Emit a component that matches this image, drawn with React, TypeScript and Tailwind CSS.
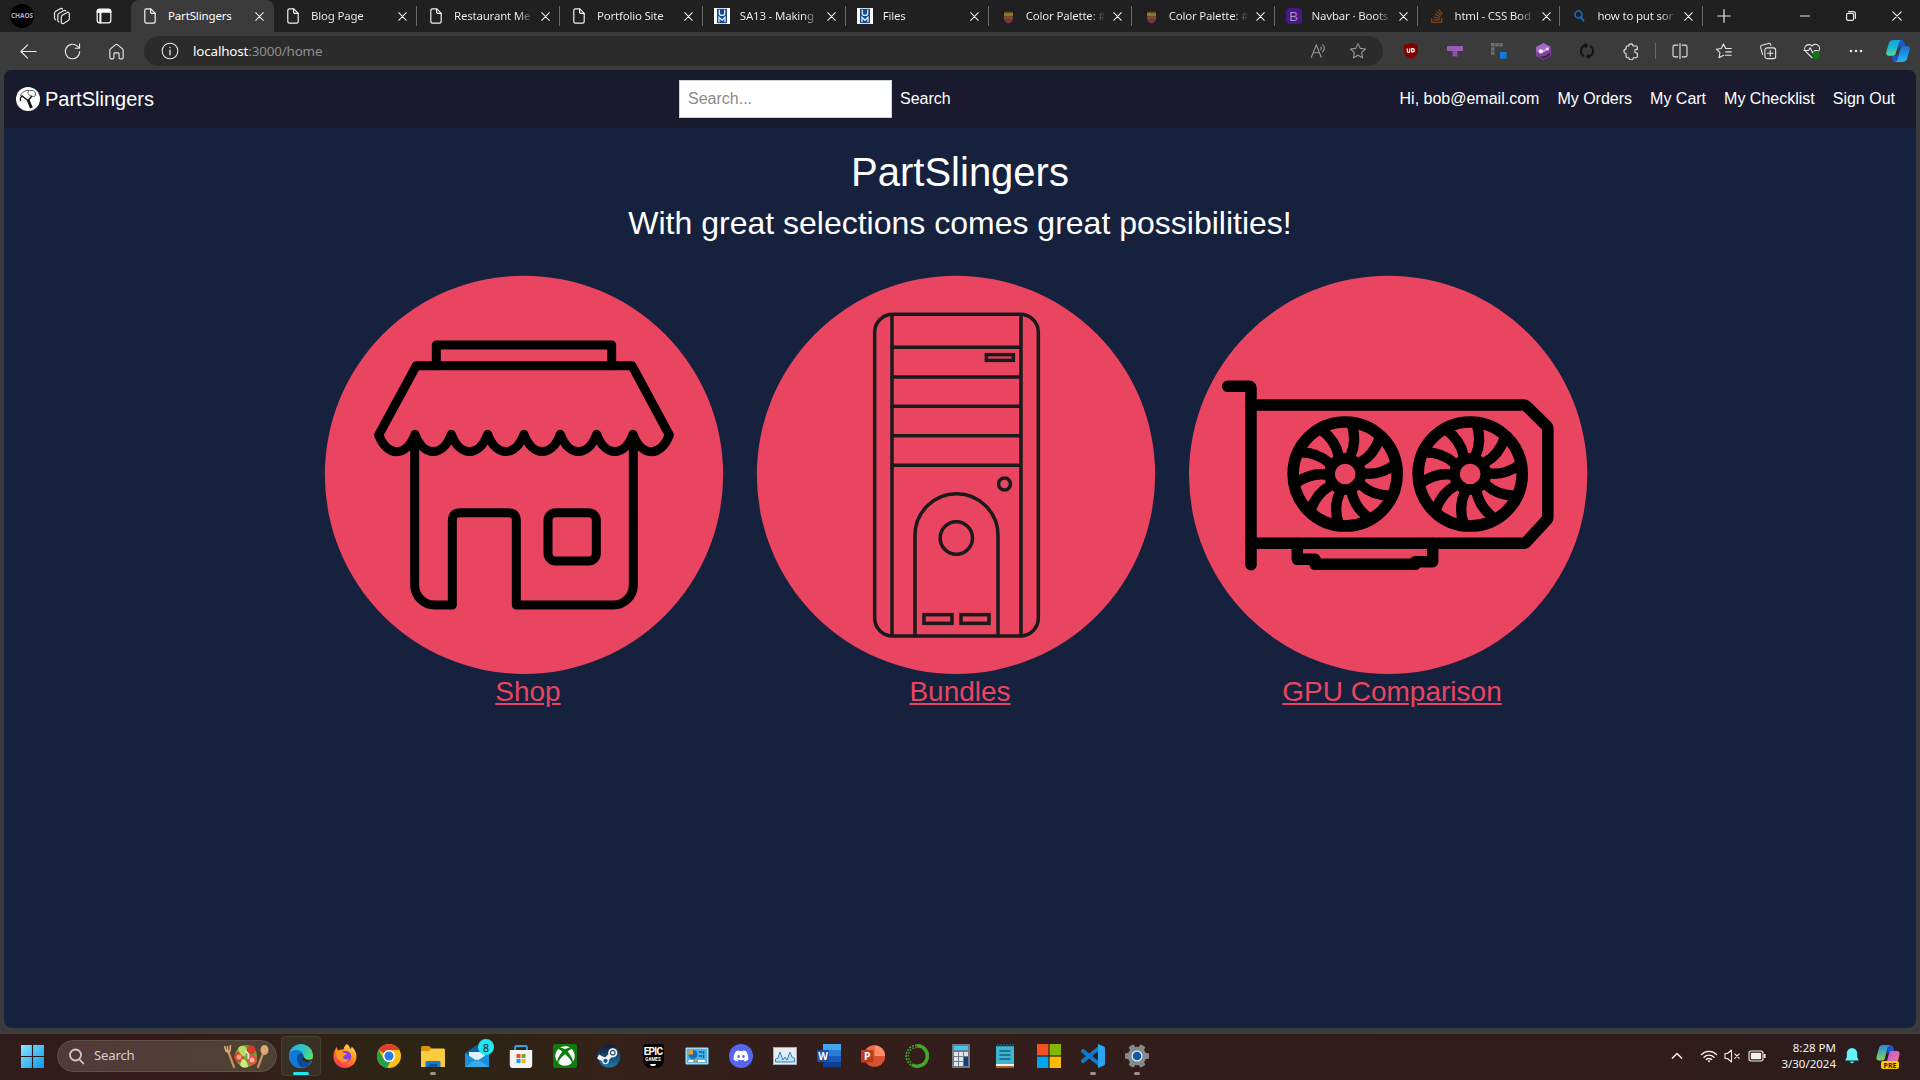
import React from 'react';
import { FaDiscord, FaSteam, FaStackOverflow, FaXbox } from 'react-icons/fa';

type IconProps = { children: React.ReactNode; size?: number; box?: string; tone?: string; className?: string };

/** Thin outlined glyph used across the browser chrome. */
function Line({ children, size = 20, box = '0 0 20 20', tone = 'text-[#e6e6e6]', className = '' }: IconProps) {
  return (
    <svg width={size} height={size} viewBox={box} fill="none" stroke="currentColor" strokeWidth="1.2" strokeLinecap="round" strokeLinejoin="round" className={`shrink-0 ${tone} ${className}`}>
      {children}
    </svg>
  );
}

function Art({ children, size = 24, box = '0 0 24 24', className = '' }: IconProps) {
  return (
    <svg width={size} height={size} viewBox={box} className={`shrink-0 ${className}`}>
      {children}
    </svg>
  );
}

/* ---------- Tab strip ---------- */

const PageFile = () => (
  <Line size={16} box="0 0 16 16" tone="text-[#f2f2f2]">
    <path d="M4.5 .8h4.3l4.4 4.5v8.2a1.7 1.7 0 0 1-1.7 1.7h-7a1.7 1.7 0 0 1-1.7-1.7v-11A1.7 1.7 0 0 1 4.5 .8z" />
    <path d="M8.6 1v3.200a1.200 1.200 0 0 0 1.200 1.200H13" />
  </Line>
);

const UM = () => (
  <Art size={16} box="0 0 16 16">
    <path fill="#fff" d="M0 0h16v16H0z" />
    <path fill="#134a91" d="M3 .8h10v14.400H3z" />
    <path d="M5.300 1.800v3.400a2.700 2.200 0 0 0 5.400 0V1.800" fill="none" stroke="#dfe8f3" strokeWidth="1.300" />
    <path d="M5 14.200V9.300L8 12.300l3-3v4.900" fill="none" stroke="#dfe8f3" strokeWidth="1.300" />
  </Art>
);

const Palette = () => (
  <Art size={16} box="0 0 16 16">
    <path d="M1 3.500l3 1.500M15 3.500l-3 1.500M5 2l1.500 2M11 2L9.500 4" stroke="#1d1113" strokeWidth="1.500" />
    <path fill="#4f4a22" d="M4 3.500h9V5H4z" />
    <path fill="#897a1f" d="M4 5h9v3.500H4z" />
    <path fill="#7f4a35" d="M4 8.500h9V11H4z" />
    <path fill="#7c3242" d="M4 11h9c0 2-2 4-4.500 4.500C6 15 4 13 4 11z" />
  </Art>
);

const Bootstrap = () => (
  <div className="flex size-4 shrink-0 items-center justify-center rounded-sm bg-[#4b1784] font-['Liberation_Sans',Arial,sans-serif] text-[13px] leading-none text-[#a494b8]">B</div>
);

const BingSearch = () => (
  <Art size={16} box="0 0 16 16">
    <circle cx="7.500" cy="6.500" r="3.500" fill="none" stroke="#1273cc" strokeWidth="1.500" />
    <path d="M9.800 9.200l2.800 3.600" stroke="#1273cc" strokeWidth="1.800" strokeLinecap="round" />
  </Art>
);

const TABS: { title: string; icon: React.ReactNode }[] = [
  { title: 'PartSlingers', icon: <PageFile /> },
  { title: 'Blog Page', icon: <PageFile /> },
  { title: 'Restaurant Me', icon: <PageFile /> },
  { title: 'Portfolio Site', icon: <PageFile /> },
  { title: 'SA13 - Making', icon: <UM /> },
  { title: 'Files', icon: <UM /> },
  { title: 'Color Palette: #', icon: <Palette /> },
  { title: 'Color Palette: #', icon: <Palette /> },
  { title: 'Navbar · Boots', icon: <Bootstrap /> },
  { title: 'html - CSS Bod', icon: <FaStackOverflow size={16} className="shrink-0 text-[#7c421c]" /> },
  { title: 'how to put sor', icon: <BingSearch /> },
];

const Cross = ({ size = 9 }: { size?: number }) => (
  <Line size={size} box="0 0 10 10" tone="text-[#f0f0f0]">
    <path d="M.8.8l8.400 8.400M9.200.8L.8 9.200" />
  </Line>
);

function TabStrip() {
  return (
    <div className="flex h-8 bg-[#202020]">
      <div className="flex w-[131px] shrink-0 items-center">
        <div className="ml-[10px] flex size-6 items-center justify-center overflow-hidden rounded-full bg-black text-[6.500px] font-bold text-[#b9a6cf]">CHAOS</div>
        <Line size={18} box="0 0 18 18" className="ml-[19px]">
          <path d="M2.700 12.800A2 2 0 0 1 1.500 11V6.200a2 2 0 0 1 1-1.700L7.500 1.600a1.600 1.600 0 0 1 2 .4" />
          <path d="M6 15a2 2 0 0 1-1.200-1.800V8.100a2 2 0 0 1 1-1.700l5-2.900a1.600 1.600 0 0 1 2 .4" />
          <path d="M8.300 10a2 2 0 0 1 1-1.700l4.800-2.800a1.400 1.400 0 0 1 2.200 1.200v5.100a2 2 0 0 1-1 1.700l-4.800 2.900a1.400 1.400 0 0 1-2.200-1.200z" />
        </Line>
        <Line size={16} box="0 0 16 16" tone="text-white" className="ml-[25px]">
          <rect x="1.200" y="1.200" width="13.600" height="13.600" rx="2.400" />
          <path d="M1.500 3.800h13M4.400 4v10.500" strokeWidth="2" />
          <path d="M2 2.200h12" strokeWidth="2" />
        </Line>
      </div>
      {TABS.map((t, i) => (
        <div
          key={i}
          className={
            i === 0
              ? 'flex w-[143px] shrink-0 items-center rounded-t-lg bg-[#3b3b3b] pl-[11px]'
              : 'flex w-[142.95px] shrink-0 items-center pl-[11px]'
          }
        >
          {t.icon}
          <span
            className={
              i === 0
                ? 'ml-[10px] w-[80px] whitespace-nowrap text-[11.500px] tracking-[-0.15px] text-white'
                : 'ml-[10px] w-[80px] bg-gradient-to-r from-[#f4f4f4] from-80% to-[#202020] to-100% bg-clip-text whitespace-nowrap text-[11.500px] tracking-[-0.2px] text-transparent'
            }
          >
            {t.title}
          </span>
          <span className="ml-[7px] flex">
            <Cross />
          </span>
          {i > 0 && <span className="ml-auto h-5 w-px bg-[#6a6a6a]" />}
        </div>
      ))}
      <div className="flex flex-1 items-center">
        <Line size={14} box="0 0 14 14" className="ml-[14px]">
          <path d="M7 .7v12.600M.7 7h12.600" />
        </Line>
        <div className="ml-auto flex">
          <div className="flex w-[46px] justify-center"><Line size={10} box="0 0 10 10"><path d="M.5 5h9" /></Line></div>
          <div className="flex w-[46px] justify-center">
            <Line size={10} box="0 0 10 10">
              <rect x=".6" y="2.400" width="7" height="7" rx="1.300" />
              <path d="M2.600.7H7.400a2 2 0 0 1 2 2v4.600" />
            </Line>
          </div>
          <div className="flex w-[46px] justify-center"><Cross size={10} /></div>
        </div>
      </div>
    </div>
  );
}

/* ---------- Toolbar ---------- */

const Cell = ({ children }: { children: React.ReactNode }) => (
  <div className="flex w-11 shrink-0 items-center justify-center">{children}</div>
);

const Ribbon = ({ size }: { size: number }) => (
  <Art size={size}>
    <defs>
      <linearGradient id="ribA" x1="0" y1="0" x2="0" y2="1">
        <stop offset="0" stopColor="#12a5e0" />
        <stop offset=".5" stopColor="#1fb9cf" />
        <stop offset="1" stopColor="#55dc9a" />
      </linearGradient>
      <linearGradient id="ribB" x1="0" y1="0" x2="0" y2="1">
        <stop offset="0" stopColor="#1c6fd0" />
        <stop offset="1" stopColor="#25b4f5" />
      </linearGradient>
    </defs>
    <path fill="#1b57c9" d="M13 1h2.500c1.500 0 2.400 1 2.800 2.400L19.500 7H15l-3 3z" />
    <path fill="url(#ribA)" d="M7.500 1h7.800c-1.300.3-2 1.300-2.400 2.700L9.700 14.600C9.200 16 8.400 16.800 7 16.800H3C1 16.800-.3 15.200.2 13.200L3 4C3.600 2.200 5.300 1 7.500 1z" />
    <path fill="#1f50e0" d="M6 16.800h4l2-1-2 7.200H9c-1.400 0-2-1-2.300-2.300z" />
    <path fill="url(#ribB)" d="M17.500 7H21c2 0 3.300 1.600 2.800 3.600L21 20c-.6 1.800-2.300 3-4.500 3H9c1.300-.3 2-1.300 2.400-2.700l3.200-10.900C15 8 16 7 17.500 7z" />
  </Art>
);

function Toolbar() {
  return (
    <div className="flex h-[38px] items-center bg-[#3b3b3b]">
      <div className="flex w-[144px] shrink-0 pl-[6px]">
        <Cell><Line size={19}><path d="M18 10H2.500M9 3L2 10l7 7" /></Line></Cell>
        <Cell><Line size={19}><path d="M17.600 10a7.600 7.600 0 1 1-2.500-5.600L17.300 6.500M17.400 2v4.600h-4.600" /></Line></Cell>
        <Cell><Line size={19}><path d="M3 8.800a2 2 0 0 1 .7-1.500L8.700 3a2 2 0 0 1 2.600 0l5 4.300a2 2 0 0 1 .7 1.500v7.400a1.500 1.500 0 0 1-1.500 1.500h-1.300a1.500 1.500 0 0 1-1.500-1.500V12.500a1 1 0 0 0-1-1H8.300a1 1 0 0 0-1 1v3.700a1.500 1.500 0 0 1-1.500 1.500H4.500A1.500 1.500 0 0 1 3 16.200z" /></Line></Cell>
      </div>
      <div className="flex h-[30px] w-[1239px] shrink-0 items-center rounded-full bg-[#2b2b2b] pl-[17px] pr-[16px]">
        <Line size={18}><circle cx="10" cy="10" r="8.700" /><path d="M10 9v5.200M10 6v.3" strokeWidth="1.500" /></Line>
        <span className="ml-[14px] text-[13.400px] tracking-[-0.15px] text-[#8f8f8f]"><span className="text-white">localhost</span>:3000/home</span>
        <span className="ml-auto flex gap-[21px]">
          <Line size={18} tone="text-[#9a9a9a]"><path d="M1.500 17L7 3l5.500 14M3.500 12h7M12 5.500c.8.800.8 2 0 3M14 3c2.300 2 2.300 5.300 0 8" /></Line>
          <Line size={18} tone="text-[#9a9a9a]"><path d="M10 1.800l2.500 5.300 5.800.7-4.300 4 1.100 5.800-5.100-2.900-5.100 2.900L6 11.800l-4.300-4 5.800-.7z" /></Line>
        </span>
      </div>
      <div className="flex pl-[6px]">
        <Cell>
          <Art size={16} box="0 0 16 16">
            <path fill="#800000" d="M8 0l7 2v6c0 4-3 6.500-7 8-4-1.500-7-4-7-8V2z" />
            <path d="M4.300 5.500v2.700a1.200 1.200 0 0 0 2.400 0V5.500M8.700 8.900V5.600h1a1.650 1.650 0 0 1 0 3.300z" fill="none" stroke="#fff" strokeWidth="1.200" />
          </Art>
        </Cell>
        <Cell><Art size={16} box="0 0 16 16"><path fill="#9a5cb8" d="M0 3h16v5H0z" /><path fill="#8a4fa8" d="M5.500 8h5v5.500h-5z" /></Art></Cell>
        <Cell>
          <Art size={16} box="0 0 16 16">
            <path fill="#6e6e6e" d="M0 0h3.500v3.500H0zM4.200 0h3.500v3.500H4.200zM8.400 0h3.500v3.500H8.400zM0 4.200h3.500v3.500H0zM0 8.400h3.500v3.500H0z" />
            <path fill="#0a7be8" d="M9 9h6.500v6.500H9z" />
          </Art>
        </Cell>
        <Cell>
          <Art size={17} box="0 0 16 16">
            <path fill="#7d429e" d="M8 0l7 3.800v8.400L8 16l-7-3.800V3.800z" />
            <path fill="#a368c4" d="M8 0l7 3.800L8 7.500 1 9V3.800z" />
            <path d="M5 8.500C8 9 9 5.500 13 6" stroke="#cda3e2" strokeWidth="2" fill="none" />
            <path fill="#43204f" d="M3 12c3 2 8 0 11-3v3L8 15z" />
            <circle cx="5.500" cy="7.800" r="2" fill="#fff" />
            <circle cx="11.500" cy="5.500" r="1.200" fill="#f3e5fa" />
          </Art>
        </Cell>
        <Cell><Line size={16} box="0 0 16 16" tone="text-[#121212]"><path d="M4.500 12.800A5.800 5.800 0 0 1 7 2.300M11.500 3.200A5.800 5.800 0 0 1 9 13.700" strokeWidth="2" /><path d="M6 .9L8.300 2.300 6.600 4.400M10 15.100L7.700 13.700l1.700-2.100" strokeWidth="1.400" /></Line></Cell>
        <Cell><Line size={18}><path d="M7.500 4.500a2.400 2.400 0 0 1 4.800 0h3.400a1.300 1.300 0 0 1 1.300 1.300v2.400h-.9a2 2 0 0 0 0 4h.9V16.200a1.300 1.300 0 0 1-1.300 1.300h-3.200a2.400 2.400 0 0 1-4.800 0H5.800a1.300 1.300 0 0 1-1.300-1.300v-3.500a2.400 2.400 0 0 1 0-4.800V5.800a1.300 1.300 0 0 1 1.300-1.300z" /></Line></Cell>
      </div>
      <span className="mx-[2px] h-4 w-px bg-[#6a6a6a]" />
      <div className="flex">
        <Cell><Line size={18}><path d="M10 1.500v17M7.500 3.500H4A1.800 1.800 0 0 0 2.200 5.300v9.400A1.800 1.800 0 0 0 4 16.500h3.500M12.500 3.500H16a1.800 1.800 0 0 1 1.800 1.800v9.400a1.800 1.800 0 0 1-1.800 1.800h-3.500" /></Line></Cell>
        <Cell><Line size={18}><path d="M9.500 14.800l-5 2.600 1-5.500L1.500 8l5.500-.8L9.400 2.200 11.900 7.200H18M12 11h6M11.500 14.800H18" /></Line></Cell>
        <Cell><Line size={18}><rect x="6.500" y="6.500" width="12" height="12" rx="2.500" /><path d="M12.500 9.500v6M9.500 12.500h6M4 14l-2.200-8A2 2 0 0 1 3.200 3.600L10.500 1.600A2 2 0 0 1 13 3l.2.800" /></Line></Cell>
        <Cell>
          <Line size={18}>
            <path d="M10 17.500L3 10.500a4.600 4.600 0 0 1 7-6 4.600 4.600 0 0 1 7.500 5.500M1 9.500h5l2-3 3 6 2-3h3" />
            <circle cx="14.500" cy="14.500" r="4.300" fill="#0f7a10" stroke="none" />
          </Line>
        </Cell>
        <Cell><svg width="14" height="4" viewBox="0 0 14 4" fill="#e6e6e6"><circle cx="2" cy="2" r="1.300" /><circle cx="7" cy="2" r="1.300" /><circle cx="12" cy="2" r="1.300" /></svg></Cell>
        <div className="flex w-[40px] items-center justify-center"><Ribbon size={24} /></div>
      </div>
    </div>
  );
}

/* ---------- Site ---------- */

const SITE_FONT = "font-['Liberation_Sans',Arial,sans-serif]";

function SiteNav() {
  return (
    <nav className="flex h-[58px] items-center justify-between bg-[#1a1a2e] px-3 text-base text-white">
      <div className="flex w-[663px] items-center gap-[5px]">
        <Art>
          <circle cx="12" cy="12" r="12" fill="#fff" />
          <path d="M12 13.500L6 9C4 11 4 13 5 14M12 13.500l4-4.500" fill="none" stroke="#111" strokeWidth="1.400" />
          <path d="M15.400 21l-3.300-8" stroke="#111" strokeWidth="2.800" />
          <path d="M4.500 9C6 4.500 10 3 13.500 3.500c4-1 6.500 1.500 6 4.500-.5 2-3 2-4 .500" fill="none" stroke="#555" strokeWidth="1" />
          <path d="M13 4c-2 1.500-1 4 2 5" fill="none" stroke="#555" strokeWidth=".9" />
        </Art>
        <span className="text-xl leading-[30px]">PartSlingers</span>
      </div>
      <div className="mr-auto flex items-center gap-2">
        <div className="flex h-[38px] w-[213px] items-center border border-[#ced4da] bg-white pl-[8px] text-[#8a8a8a]">Search...</div>
        <span>Search</span>
      </div>
      <div className="flex gap-[18px] pr-[9px]">
        <span>Hi, bob@email.com</span>
        <span>My Orders</span>
        <span>My Cart</span>
        <span>My Checklist</span>
        <span>Sign Out</span>
      </div>
    </nav>
  );
}

const ShopArt = () => (
  <svg width="408" height="400" viewBox="42 45 1224 1200" fill="none">
    <circle cx="642" cy="644.500" r="597.500" fill="#e94560" />
    <g stroke="#000" strokeWidth="27" strokeLinejoin="round" strokeLinecap="round">
      <path d="M379 317V255H905V317" />
      <path d="M206 525L319 317H966L1078 525C1052 592 995 592 969 523C943 592 886 592 860 523C834 592 777 592 751 523C725 592 668 592 642 523C616 592 559 592 533 523C507 592 450 592 424 523C398 592 341 592 315 523C289 592 232 592 206 525z" />
      <path d="M314 535V975a60 60 0 0 0 60 60H427V782q0-24 24-24H595q24 0 24 24V1035H910a60 60 0 0 0 60-60V535" />
      <rect x="714" y="758" width="145" height="145" rx="23" />
    </g>
  </svg>
);

const TowerArt = () => (
  <svg width="408" height="400" viewBox="48 45 1224 1200" fill="none">
    <circle cx="648" cy="644.500" r="597.500" fill="#e94560" />
    <g stroke="#1a1a1c" strokeWidth="10.500">
      <rect x="404" y="163" width="491" height="965" rx="54" />
      <path d="M456 163V1128M843 163V1128M456 262H843M456 351H843M456 439H843M456 527H843M456 616H843" />
      <rect x="739" y="284" width="81" height="17" />
      <circle cx="793.500" cy="672" r="18" />
      <path d="M525 1128V826a124 124 0 0 1 249 0V1128" />
      <circle cx="649" cy="834" r="48.500" />
      <rect x="552" y="1064" width="84" height="26" />
      <rect x="663" y="1064" width="84" height="26" />
    </g>
  </svg>
);

const BLADES = [0, 36, 72, 108, 144, 180, 216, 252, 288, 324];

const Fan = ({ cx }: { cx: number }) => (
  <g transform={`translate(${cx} 642)`}>
    <circle r="156" strokeWidth="35" />
    <circle r="47" strokeWidth="32" />
    {BLADES.map((a) => (
      <path key={a} d="M16-55Q36-98 20-148" strokeWidth="31" strokeLinecap="butt" transform={`rotate(${a})`} />
    ))}
  </g>
);

const GpuArt = () => (
  <svg width="408" height="400" viewBox="24 45 1224 1200" fill="none">
    <circle cx="624.500" cy="644.500" r="597.500" fill="#e94560" />
    <g stroke="#000" strokeWidth="34.500" strokeLinejoin="round" strokeLinecap="round">
      <path d="M143 379H207Q213 379 213 385V914" />
      <path d="M213 435H1030Q1036 435 1040 439L1099 497Q1103.500 501 1103.500 507V771Q1103.500 777 1099 781L1040 845Q1036 850 1030 850H213" />
      <path d="M352 850V898H405V913H706V905H758V850" />
      <Fan cx={495.500} />
      <Fan cx={870.500} />
    </g>
  </svg>
);

const CARDS = [
  { label: 'Shop', art: <ShopArt /> },
  { label: 'Bundles', art: <TowerArt /> },
  { label: 'GPU Comparison', art: <GpuArt /> },
];

function Site() {
  return (
    <div className={`mx-1 h-[958px] overflow-hidden rounded-lg bg-[#16213e] ${SITE_FONT}`}>
      <SiteNav />
      <main className="pt-5 text-center text-white">
        <h1 className="text-[40px] leading-[48px]">PartSlingers</h1>
        <h2 className="mt-2 text-[32px] leading-[38px]">With great selections comes great possibilities!</h2>
        <div className="mx-auto mt-[33px] grid w-[1296px] grid-cols-3">
          {CARDS.map((c) => (
            <div key={c.label} className="px-3">
              {c.art}
              <a className="block text-[28px] leading-[34px] text-[#e94560] underline">{c.label}</a>
            </div>
          ))}
        </div>
      </main>
    </div>
  );
}

/* ---------- Taskbar ---------- */

const Edge = () => (
  <Art>
    <defs>
      <linearGradient id="edgeTop" x1="0" y1="0" x2="1" y2=".6"><stop offset="0" stopColor="#2bb0e8" /><stop offset=".6" stopColor="#2fc7b8" /><stop offset="1" stopColor="#6fe05a" /></linearGradient>
    </defs>
    <circle cx="12" cy="12" r="12" fill="url(#edgeTop)" />
    <path fill="#1177d4" d="M0 12C0 8 4 5.500 8 6c4 .4 6.500 3 6.500 6 0 1.500-1.500 2-1.500 3.300 0 2.500 5 4 9.500 1.700C20.500 21.500 16.500 24 12 24 5 24 0 19 0 12z" />
    <path fill="#0c4a9c" d="M8 14c0-3 2-5 4.500-4.500 1.500.3 2 1.500 2 2.500 0 1.500-1.500 2-1.500 3.300 0 2.500 5 4 9.500 1.700C20.500 21.500 17 23.500 14 23.500 10.500 23 8 18.500 8 14z" />
    <path fill="#312a1c" d="M14.500 12c0 1.500-1.500 2-1.500 3.300 0 2.500 5 4 9.500 1.700 1-.5 1.700-1.700 1.400-2.500-2 2-8 2.300-9.400-2.500z" />
  </Art>
);

const Firefox = () => (
  <Art>
    <defs>
      <linearGradient id="fox" x1=".8" y1="0" x2=".2" y2="1"><stop offset="0" stopColor="#ffe34a" /><stop offset=".45" stopColor="#ff8a1f" /><stop offset="1" stopColor="#f52a5e" /></linearGradient>
    </defs>
    <path fill="url(#fox)" d="M14 0c2 1.500 3 3.500 3.500 5 1-.5 1-1.500 1-2.500C22 5 23.500 9 23.500 12.500 23.500 19 18.500 24 12 24S.5 19 .5 13C.5 8 2 6 3.500 3L5 6.500C7 5 9 5.500 10.500 5.500 11 3 12 1 14 0z" />
    <circle cx="12.500" cy="12.500" r="5.800" fill="#8440d8" />
    <path fill="#ff9a1e" d="M3 8c3-2 6-1 8 1l3 .5c-1 2-3.500 1.500-4 3.500 1 3 4 3 6 1.500-1 4-6 5-9 2.500S3 11 3 8z" />
  </Art>
);

const Chrome = () => (
  <Art>
    <circle cx="12" cy="12" r="12" fill="#fbc116" />
    <path fill="#e33b2e" d="M12 0a12 12 0 0 1 10.400 6H12a6 6 0 0 0-5.200 3L1.600 6A12 12 0 0 1 12 0z" />
    <path fill="#1ea04c" d="M1.600 6l5.200 9A6 6 0 0 0 13 18l-3 5.800A12 12 0 0 1 1.600 6z" />
    <circle cx="12" cy="12" r="6" fill="#fff" />
    <circle cx="12" cy="12" r="4.600" fill="#2a7bea" />
  </Art>
);

const Explorer = () => (
  <Art>
    <path fill="#d9930c" d="M0 3.500A1.500 1.500 0 0 1 1.500 2H8l2.500 2.500V9H0z" />
    <path fill="#fccb40" d="M0 7h8l2.500-2.500H22.500A1.500 1.500 0 0 1 24 6v17H0z" />
    <path fill="#1977c8" d="M4.500 23v-4.500A1.500 1.500 0 0 1 6 17h12a1.500 1.500 0 0 1 1.500 1.500V23z" />
    <path fill="#0e5599" d="M8 20h8v3H8z" />
  </Art>
);

const Mail = () => (
  <div className="relative flex">
    <Art>
      <path fill="#0f5fa8" d="M0 9L12 1l12 8v5H0z" />
      <path fill="#dff1fb" d="M4 8h16v8H4z" />
      <path fill="#1a90dc" d="M0 9l12 8 12-8v14H0z" />
      <path fill="#50c0f5" d="M0 23l12-8 12 8z" opacity=".6" />
    </Art>
    <span className="absolute -right-[5px] -top-[5px] flex size-4 items-center justify-center rounded-full bg-[#22e6f2] text-[11px] leading-none text-[#0a2230]">8</span>
  </div>
);

const Store = () => (
  <Art>
    <path d="M6 6V3.500A1.500 1.500 0 0 1 7.500 2h9A1.500 1.500 0 0 1 18 3.500V6" fill="none" stroke="#2aa8ec" strokeWidth="1.800" />
    <path fill="#f4f4f4" d="M.8 6h22.400v15a3 3 0 0 1-3 3H3.800a3 3 0 0 1-3-3z" />
    <path fill="#e84e26" d="M7.500 10h4v4h-4z" /><path fill="#71b01c" d="M12.500 10h4v4h-4z" />
    <path fill="#1d9de2" d="M7.500 15h4v4h-4z" /><path fill="#f5b41a" d="M12.500 15h4v4h-4z" />
  </Art>
);

const Xbox = () => (
  <div className="flex size-6 items-center justify-center rounded-[2px] bg-[#107c10]"><FaXbox size={20} className="text-white" /></div>
);

const Steam = () => (
  <Art>
    <defs><linearGradient id="steam" x1="0" y1="0" x2="0" y2="1"><stop offset="0" stopColor="#111a35" /><stop offset="1" stopColor="#1f78b0" /></linearGradient></defs>
    <circle cx="12" cy="12" r="11.500" fill="url(#steam)" />
    <path d="M1 12.500l7.500 4 6.500-7" stroke="#eef3f7" strokeWidth="4.500" fill="none" strokeLinejoin="round" />
    <circle cx="15.800" cy="8.800" r="4.600" fill="#eef3f7" /><circle cx="15.800" cy="8.800" r="2.700" fill="#15294d" /><circle cx="15.800" cy="8.800" r="1.800" fill="#eef3f7" />
    <circle cx="8.500" cy="16.800" r="2.800" fill="#1b5a8c" stroke="#eef3f7" strokeWidth="1.300" />
  </Art>
);

const Epic = () => (
  <div className="flex h-6 w-[21px] flex-col items-center rounded-[3px] rounded-b-[8px] bg-black pt-[2px] text-white">
    <span className="font-[Roboto,sans-serif] text-[10px] font-bold leading-[11px] tracking-[-0.7px]">EPIC</span>
    <span className="font-[Roboto,sans-serif] text-[4.500px] font-bold leading-[5px]">GAMES</span>
    <span className="mt-[2px] h-[2px] w-[6px] rounded-b-full bg-white" />
  </div>
);

const ControlPanel = () => (
  <Art>
    <rect x=".5" y="3.500" width="23" height="17" rx="1" fill="#9fdcf8" />
    <path fill="#4db4ea" d="M2 5h20v14H2z" />
    <circle cx="8" cy="10.500" r="4.500" fill="#1570c0" />
    <path fill="#f29a1f" d="M8 10.500V5.500a4.800 4.800 0 0 0-5 5z" />
    <path d="M14 8h3M18.500 7v3M14 12h3M18.500 11v3" stroke="#0e5799" strokeWidth="1.500" />
    <path d="M3.500 17h5M13 17h7" stroke="#fff" strokeWidth="1.800" /><path d="M8 17h5" stroke="#ef8b1d" strokeWidth="1.800" />
  </Art>
);

const Discord = () => (
  <div className="flex size-6 items-center justify-center rounded-full bg-[#5865f2]"><FaDiscord size={16} className="text-white" /></div>
);

const Monitor = () => (
  <Art>
    <rect x=".5" y="3.500" width="23" height="17" fill="#e9edf0" stroke="#a6adb3" />
    <path d="M2.500 18v-3l2.500-1 2-6 3 8 2-3 2 3 3-8 2 5 2.500 1v4z" fill="#bfe0f2" stroke="#3487bd" />
  </Art>
);

const Word = () => (
  <Art>
    <path fill="#41a5ee" d="M6 0h18v7H6z" /><path fill="#2b7cd3" d="M6 6h18v6H6z" /><path fill="#185abd" d="M6 12h18v6H6z" /><path fill="#103f91" d="M6 18h18v5H6z" />
    <rect y="6" width="12" height="12" rx="1.200" fill="#1553ad" />
    <text x="6" y="15.600" textAnchor="middle" fontSize="10" fontWeight="700" fill="#fff">W</text>
  </Art>
);

const PowerPoint = () => (
  <Art>
    <circle cx="13.500" cy="12" r="10.800" fill="#d35230" />
    <path fill="#ff8f6b" d="M13.500 1.200A10.800 10.800 0 0 1 24 12H13.500z" /><path fill="#ed6c47" d="M13.500 1.200V12H2.800a10.800 10.800 0 0 1 10.700-10.800z" />
    <rect y="6" width="12.500" height="12.500" rx="1.200" fill="#c23a1c" />
    <text x="6.200" y="16" textAnchor="middle" fontSize="10.500" fontWeight="700" fill="#fff">P</text>
  </Art>
);

const Anaconda = () => (
  <Art>
    <path d="M12 1.800a10.200 10.200 0 1 1-5 19" fill="none" stroke="#44a82b" strokeWidth="3.600" />
    <path d="M12 1.200A10.800 10.800 0 0 0 7 21.600" fill="none" stroke="#44a82b" strokeWidth="1.600" strokeDasharray="2 1.200" />
    <path d="M12 3.500A8.500 8.500 0 0 0 7 19" fill="none" stroke="#44a82b" strokeWidth="1.500" strokeDasharray="1.500 1.600" />
  </Art>
);

const Calculator = () => (
  <Art>
    <rect x="3" width="18" height="24" rx="1" fill="#6e7b86" />
    <path fill="#3fc8f2" d="M5 2h14v4H5z" />
    {[8, 13, 18].map((y) => [5, 10, 15].map((x) => <rect key={`${x}-${y}`} x={x} y={y} width="4" height="4" fill={x === 15 && y > 8 ? '#123f78' : '#dfe6ea'} />))}
    <path fill="#123f78" d="M15 13h4v9h-4z" />
  </Art>
);

const Notepad = () => (
  <Art>
    <path fill="#3fb4d0" d="M3 2h18v18H3z" />
    <path fill="#f2f2f2" d="M3 20h18v2H3z" /><path fill="#b0601a" d="M3 22h18v2H3z" />
    <path d="M5 0v3M8 0v3M11 0v3M14 0v3M17 0v3M20 0v3" stroke="#1a6a86" strokeWidth="1.300" />
    <path d="M6.500 7h11M6.500 11h11M6.500 15h11" stroke="#155f7c" strokeWidth="1.600" />
  </Art>
);

const Squares = () => (
  <Art>
    <path fill="#f25022" d="M0 0h11.400v11.400H0z" /><path fill="#7fba00" d="M12.600 0H24v11.400H12.600z" />
    <path fill="#00a4ef" d="M0 12.600h11.400V24H0z" /><path fill="#ffb900" d="M12.600 12.600H24V24H12.600z" />
  </Art>
);

const Code = () => (
  <Art>
    <path d="M17.500 4.500L2 17M2 7l15.500 12.500" stroke="#0f7ccb" strokeWidth="4" strokeLinecap="round" />
    <path fill="#2aa5f2" d="M17 0l6 2.600q1 .5 1 1.600v15.600q0 1.100-1 1.600L17 24z" />
    <path fill="#2f1e1c" d="M17 8v8l-5-4z" />
  </Art>
);

const TEETH = [0, 60, 120, 180, 240, 300];
const Gear = () => (
  <Art>
    {TEETH.map((a) => <rect key={a} x="9" y="0" width="6" height="6" rx="1.200" fill="#84898e" transform={`rotate(${a + 30} 12 12)`} />)}
    <circle cx="12" cy="12" r="9.300" fill="#84898e" /><circle cx="12" cy="12" r="5.600" fill="#e4e8eb" /><circle cx="12" cy="12" r="4.300" fill="#1359a3" />
  </Art>
);

const APPS: { icon: React.ReactNode; state?: 'active' | 'open' }[] = [
  { icon: <Edge />, state: 'active' },
  { icon: <Firefox /> },
  { icon: <Chrome /> },
  { icon: <Explorer />, state: 'open' },
  { icon: <Mail /> },
  { icon: <Store /> },
  { icon: <Xbox /> },
  { icon: <Steam /> },
  { icon: <Epic /> },
  { icon: <ControlPanel /> },
  { icon: <Discord /> },
  { icon: <Monitor /> },
  { icon: <Word /> },
  { icon: <PowerPoint /> },
  { icon: <Anaconda /> },
  { icon: <Calculator /> },
  { icon: <Notepad /> },
  { icon: <Squares /> },
  { icon: <Code />, state: 'open' },
  { icon: <Gear />, state: 'open' },
];

const Salad = () => (
  <svg width="46" height="26" viewBox="0 0 46 26" className="ml-auto mr-[7px]">
    <path d="M5 8l6 16M41 8l-6 16" stroke="#c8915c" strokeWidth="2.200" strokeLinecap="round" />
    <path d="M1.500 3l1.500 5q2 2 4 0L7.500 2M4.500 3v5" fill="none" stroke="#dca972" strokeWidth="1.600" />
    <ellipse cx="41.500" cy="7" rx="4" ry="5" fill="#dca972" />
    <circle cx="23" cy="13" r="11" fill="#6fa832" />
    <circle cx="16" cy="14" r="5" fill="#d9442f" /><circle cx="29" cy="17" r="5" fill="#e0533a" /><circle cx="28" cy="7" r="4.500" fill="#d43f2c" />
    <circle cx="16" cy="14" r="2.500" fill="#f1a08a" /><circle cx="29" cy="17" r="2.500" fill="#f4b09c" />
    <path d="M15 5q5-5 9 1l-2 8q-6-2-7-9z" fill="#b9db6a" /><path d="M19 16q5 0 6 8-6 2-8-2z" fill="#cfe77f" />
    <path d="M22 8q5 2 3 8" fill="none" stroke="#f0e3ef" strokeWidth="1.800" />
  </svg>
);

function Taskbar() {
  return (
    <div className="flex h-[47px] items-center border-t border-[#4a3c38] bg-[linear-gradient(90deg,#2f1d1b_0%,#36191b_8%,#33201a_14%,#2d2414_20%,#2d2414_25%,#352118_32%,#331e1b_40%,#331d1b_65%,#301c1b_85%,#2c1c1d_100%)] pb-[2px]">
      <Art size={23} className="ml-[21px]">
        <defs><linearGradient id="win" x1="0" y1="0" x2="1" y2="1"><stop offset="0" stopColor="#86e6fd" /><stop offset="1" stopColor="#0f97ee" /></linearGradient></defs>
        <path fill="url(#win)" d="M0 0h11.400v11.400H0zM12.600 0H24v11.400H12.600zM0 12.600h11.400V24H0zM12.600 12.600H24V24H12.600z" />
      </Art>
      <div className="ml-[13px] flex h-8 w-[220px] items-center rounded-full border border-[#62504c] bg-gradient-to-r from-[#53393a] to-[#4d4233] pl-[10px]">
        <svg width="17" height="17" viewBox="0 0 17 17" fill="none" stroke="#d2c8c6" strokeWidth="1.800" strokeLinecap="round"><circle cx="7.500" cy="7" r="5.500" /><path d="M11.500 11.500l3.800 4" /></svg>
        <span className="ml-[9px] text-[13.200px] tracking-[-0.2px] text-[#d8cfcd]">Search</span>
        <Salad />
      </div>
      <div className="flex pl-[2px]">
        {APPS.map((a, i) => (
          <div key={i} className="flex h-[44px] w-11 items-center justify-center">
            <div
              className={
                a.state === 'active'
                  ? 'flex h-10 w-10 flex-col items-center justify-between rounded border border-[#47402f] bg-[#383123] pt-[7px]'
                  : 'flex h-10 w-10 flex-col items-center justify-between pt-2'
              }
            >
              {a.icon}
              {a.state === 'active' && <span className="h-[3px] w-4 rounded-full bg-[#22e6f2]" />}
              {a.state === 'open' && <span className="mb-px h-[3px] w-[6px] rounded-full bg-[#9c9290]" />}
            </div>
          </div>
        ))}
      </div>
      <div className="ml-auto flex items-center text-[#f4f0ef]">
        <svg width="12" height="8" viewBox="0 0 12 8" fill="none" stroke="currentColor" strokeWidth="1.500"><path d="M1 6.500l5-5 5 5" /></svg>
        <svg width="18" height="14" viewBox="0 0 18 14" fill="none" stroke="currentColor" strokeWidth="1.400" strokeLinecap="round" className="ml-[17px]"><path d="M1.500 5.500a10.500 10.500 0 0 1 15 0M4 8.200a7 7 0 0 1 10 0M6.300 10.600a3.800 3.800 0 0 1 5.400 0" /><circle cx="9" cy="12.300" r="1" fill="currentColor" stroke="none" /></svg>
        <svg width="17" height="14" viewBox="0 0 17 14" fill="none" stroke="currentColor" strokeWidth="1.100" strokeLinejoin="round" className="ml-[6px]"><path d="M1 4.500h2.500L7.500 1v12L3.500 9.500H1zM10.500 4.700l5 5M15.500 4.700l-5 5" /></svg>
        <svg width="18" height="12" viewBox="0 0 18 12" fill="none" stroke="currentColor" strokeWidth="1.100" className="ml-[7px]"><rect x="1" y="1" width="14" height="10" rx="2.200" /><rect x="2.800" y="2.800" width="10.400" height="6.400" rx=".8" fill="currentColor" stroke="none" /><path d="M16.700 4v4" strokeWidth="1.600" /></svg>
        <div className="ml-[8px] w-[62px] whitespace-nowrap text-right text-[11.500px] leading-4">
          <div>8:28 PM</div>
          <div>3/30/2024</div>
        </div>
        <svg width="14" height="16" viewBox="0 0 14 16" fill="#62f3fb" className="ml-[9px]"><path d="M7 0a5.200 5.200 0 0 1 5.200 5.200V9l1.500 3.500H.3L1.800 9V5.200A5.200 5.200 0 0 1 7 0zM4.800 13.500h4.400a2.300 2.300 0 0 1-4.400 0z" /></svg>
        <div className="relative ml-[17px] mr-[20px] flex">
          <Art>
            <defs><linearGradient id="preA" x1="0" y1="0" x2="0" y2="1"><stop offset="0" stopColor="#1f8ce8" /><stop offset="1" stopColor="#8cd152" /></linearGradient><linearGradient id="preB" x1="0" y1="0" x2="1" y2="1"><stop offset="0" stopColor="#b45be8" /><stop offset="1" stopColor="#f5758c" /></linearGradient></defs>
            <path fill="#1b55c8" d="M12 1h2c2 0 3 1.500 3.500 3.500L18.500 7H14l-3 3z" />
            <path fill="url(#preA)" d="M6.500 1H14c-1.500.5-2 1.500-2.500 3L9 14c-.5 1.500-1 2.500-2.500 2.500H3c-2 0-3-1.500-2.500-3.500l2.500-9C3.500 2 4.500 1 6.500 1z" />
            <path fill="url(#preB)" d="M15 7h6c2 0 2.800 1.500 2.500 3.500L22 17H11l2-8c.4-1.400 1-2 2-2z" />
          </Art>
          <span className="absolute -bottom-px left-[5px] flex h-[8px] w-[18px] items-center justify-center rounded-[2px] bg-[#ffc800] text-[7px] font-bold leading-none text-[#2a2000]">PRE</span>
        </div>
      </div>
    </div>
  );
}

export default function App() {
  return (
    <div className="flex h-[1080px] w-[1920px] flex-col justify-between overflow-hidden bg-[#3b3b3b] font-['Noto_Sans','Open_Sans',sans-serif]">
      <div>
        <TabStrip />
        <Toolbar />
        <Site />
      </div>
      <Taskbar />
    </div>
  );
}
